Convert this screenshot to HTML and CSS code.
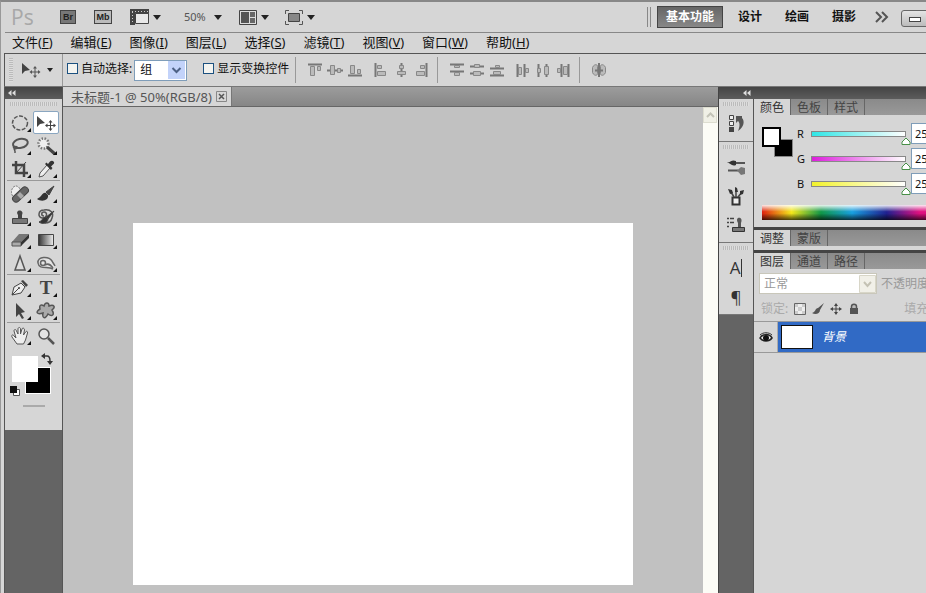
FILE: index.html
```html
<!doctype html>
<html lang="zh-CN">
	<head>
		<meta charset="UTF-8" />
		<title>未标题-1</title>
		<link rel="stylesheet" href="styles.css">
	</head>
	<body>
		<header class="appbar">
			<span class="logo">Ps</span>
			<button class="badge">Br</button>
			<button class="badge folder">Mb</button>
			<button class="view" aria-label="查看额外内容">
				<svg width="19" height="16" viewBox="0 0 19 16"><path d="M0 0h19v5H5v11H0z" fill="#444"/><path d="M5.5 4.5h13v10h-13z" fill="#e8e8e8" stroke="#444"/><path d="M2 2.5h16M2.5 3v12" stroke="#ccc" stroke-dasharray="1 2"/></svg>
				<i class="arrow"></i>
			</button>
			<label class="zoom"><select aria-label="缩放级别"><option>50%</option></select><i class="arrow"></i></label>
			<button class="view" aria-label="排列文档">
				<svg width="18" height="15" viewBox="0 0 18 15"><path d="M.5.5h17v14H.5z" fill="#ddd" stroke="#444"/><path d="M2 2h8v11H2z" fill="#555"/><path d="M11 2h5v5h-5zM11 8h5v5h-5z" fill="#666"/></svg>
				<i class="arrow"></i>
			</button>
			<button class="view" aria-label="屏幕模式">
				<svg width="18" height="15" viewBox="0 0 18 15" fill="none" stroke="#555"><path d="M.5 4V.5H4M14 .5h3.500V4M17.500 11v3.500H14M4 14.500H.5V11"/><path d="M3.500 3.500h11v8h-11z" fill="#888" stroke="#444"/></svg>
				<i class="arrow"></i>
			</button>
			<div class="spaces">
				<button class="active">基本功能</button>
				<button>设计</button>
				<button>绘画</button>
				<button>摄影</button>
				<button class="more" aria-label="更多"><svg width="14" height="12" viewBox="0 0 14 12" fill="none" stroke="#555" stroke-width="2"><path d="M1 1l5 5-5 5M7 1l5 5-5 5"/></svg></button>
			</div>
			<div class="win"><button aria-label="最小化"><i></i></button></div>
		</header>
		<nav class="menu">
			<a href="#">文件(<u>F</u>)</a>
			<a href="#">编辑(<u>E</u>)</a>
			<a href="#">图像(<u>I</u>)</a>
			<a href="#">图层(<u>L</u>)</a>
			<a href="#">选择(<u>S</u>)</a>
			<a href="#">滤镜(<u>T</u>)</a>
			<a href="#">视图(<u>V</u>)</a>
			<a href="#">窗口(<u>W</u>)</a>
			<a href="#">帮助(<u>H</u>)</a>
		</nav>
		<section class="options">
			<i class="vgrip"></i>
			<button class="current" aria-label="移动工具">
				<svg width="20" height="16" viewBox="0 0 20 16"><path d="M1 1v11l3-3 5-1z" fill="#444"/><path d="M14 4l2 2.500h-1.500V9.500H17V8l2.500 2-2.500 2v-1.500h-2.500v3H16L14 16l-2-2.500h1.500v-3H11V12l-2.500-2L11 8v1.500h2.500v-3H12z" fill="#555"/></svg>
				<i class="arrow small"></i>
			</button>
			<label class="check"><input type="checkbox">自动选择:</label>
			<label class="combo"><select aria-label="自动选择"><option>组</option></select><svg width="17" height="18" viewBox="0 0 17 18"><path d="M0 0h17v18H0z" fill="#c3d3fa"/><path d="M4.500 7l4 4 4-4" fill="none" stroke="#4d6185" stroke-width="2"/></svg></label>
			<label class="check second"><input type="checkbox">显示变换控件</label>
			<div class="align">
				<div>
					<button aria-label="顶对齐"><svg viewBox="0 0 16 14"><path class="ln" d="M1 1.500h14"/><path d="M3.500 3.500h4v9h-4zM10.500 3.500h3v4h-3z"/></svg></button>
					<button aria-label="垂直居中对齐"><svg viewBox="0 0 16 14"><path class="ln" d="M0 7.500h16"/><path d="M3.500 2.500h4v9h-4zM10.500 5.500h3v4h-3z"/></svg></button>
					<button aria-label="底对齐"><svg viewBox="0 0 16 14"><path class="ln" d="M1 12.500h14"/><path d="M3.500 2.500h4v8h-4zM10.500 6.500h3v4h-3z"/></svg></button>
				</div>
				<div>
					<button aria-label="左对齐"><svg viewBox="0 0 16 14"><path class="ln" d="M2.500 0v14"/><path d="M4.500 2.500h4v3h-4zM4.500 8.500h8v4h-8z"/></svg></button>
					<button aria-label="水平居中对齐"><svg viewBox="0 0 16 14"><path class="ln" d="M8.500 0v14"/><path d="M6.500 2.500h4v3h-4zM4.500 8.500h8v3h-8z"/></svg></button>
					<button aria-label="右对齐"><svg viewBox="0 0 16 14"><path class="ln" d="M13.500 0v14"/><path d="M7.500 2.500h4v3h-4zM3.500 8.500h8v4h-8z"/></svg></button>
				</div>
			</div>
			<div class="align">
				<div>
					<button aria-label="按顶分布"><svg viewBox="0 0 16 14"><path class="ln" d="M1 1.500h14M1 8.500h14"/><path d="M5.500 2.500h5v2h-5zM5.500 9.500h5v3h-5z"/></svg></button>
					<button aria-label="垂直居中分布"><svg viewBox="0 0 16 14"><path class="ln" d="M1 3.500h14M1 10.500h14"/><path d="M5.500 1.500h5v3h-5zM4.500 8.500h7v4h-7z"/></svg></button>
					<button aria-label="按底分布"><svg viewBox="0 0 16 14"><path class="ln" d="M1 5.500h14M1 12.500h14"/><path d="M6.500 2.500h4v2h-4zM4.500 8.500h7v3h-7z"/></svg></button>
				</div>
				<div>
					<button aria-label="按左分布"><svg viewBox="0 0 16 14"><path class="ln" d="M2.500 1v13M9.500 1v13"/><path d="M3.500 4.500h3v7h-3zM10.500 5.500h3v4h-3z"/></svg></button>
					<button aria-label="水平居中分布"><svg viewBox="0 0 16 14"><path class="ln" d="M3.500 1v13M11.500 1v13"/><path d="M2.500 5.500h3v4h-3zM9.500 3.500h4v8h-4z"/></svg></button>
					<button aria-label="按右分布"><svg viewBox="0 0 16 14"><path class="ln" d="M6.500 1v13M13.500 1v13"/><path d="M2.500 5.500h3v4h-3zM8.500 3.500h4v8h-4z"/></svg></button>
				</div>
			</div>
			<div class="align">
				<button aria-label="自动对齐图层"><svg viewBox="0 0 16 14"><path d="M1.500 4.500c1-3 5-4 5-1v7c0 3-4 2-5-1zM14.500 4.500c-1-3-5-4-5-1v7c0 3 4 2 5-1z"/><path class="ln" d="M4 7.500h8M8 0v14"/></svg></button>
			</div>
		</section>
		<main class="work">
			<aside class="tools">
				<div class="bar"><svg width="8" height="6" viewBox="0 0 8 6"><path d="M3.500 0v6L0 3zM7.500 0v6L4 3z" fill="#ddd"/></svg></div>
				<div class="toolbox">
					<i class="grip"></i>
					<div class="group">
						<button class="sub" aria-label="椭圆选框工具"><svg viewBox="0 0 20 20"><ellipse cx="10" cy="10" rx="7.500" ry="7" fill="none" stroke="#555" stroke-width="1.500" stroke-dasharray="4 1.500"/></svg></button>
						<button class="active" aria-label="移动工具"><svg viewBox="0 0 20 20"><path d="M1 3v11l3-3 5-1z" fill="#444"/><path d="M14.500 7l2 2.500H15V12h2.500v-1.500L20 12.500l-2.500 2V13H15v2.500h1.500l-2 2.500-2-2.500H14V13h-2.500v1.500L9 12.500l2.500-2V12H14V9.500h-1.500z" fill="#444"/></svg></button>
						<button class="sub" aria-label="套索工具"><svg viewBox="0 0 20 20" fill="none" stroke="#555" stroke-width="2"><ellipse cx="10.500" cy="7.500" rx="7.500" ry="4.500" transform="rotate(-12 10 8)"/><path d="M4 10c-2 2 2 4 3 2S4 10 4 12s1.500 2 1 5" stroke-width="1.500"/></svg></button>
						<button class="sub" aria-label="魔棒工具"><svg viewBox="0 0 20 20"><circle cx="7.500" cy="7.500" r="5" fill="#eee" stroke="#777" stroke-width="2.500" stroke-dasharray="1.500 1.500"/><path d="M11 11l8 7" stroke="#444" stroke-width="3"/></svg></button>
						<button class="sub" aria-label="裁剪工具"><svg viewBox="0 0 20 20" fill="none" stroke="#444" stroke-width="2.500"><path d="M6 2v12h12M2 6h12v12"/><path d="M6 14l10-11" stroke-width="1"/></svg></button>
						<button class="sub" aria-label="吸管工具"><svg viewBox="0 0 20 20"><path d="M3 18l1-4 7-8 3 3-7 8z" fill="#eee" stroke="#555"/><path d="M9 5l6 6 1.500-2L15 7.500l3-3c1-2-2-4-4-2l-2 2.500-1.500-1.500z" fill="#333"/></svg></button>
					</div>
					<div class="group">
						<button class="sub" aria-label="修复画笔"><svg viewBox="0 0 20 20"><ellipse cx="6" cy="8" rx="4.500" ry="6" fill="#eee" stroke="#777" stroke-dasharray="2 1"/><rect x="1" y="7" width="19" height="7" rx="3.500" fill="#666" stroke="#444" transform="rotate(-43 10.500 10.500)"/><path d="M7 11l3-3 4 4-3 3z" fill="#aaa"/></svg></button>
						<button class="sub" aria-label="画笔工具"><svg viewBox="0 0 20 20"><path d="M18 2l-8 6 3 3z" fill="#444" stroke="#444"/><path d="M10 9c-4-1-4 4-9 6 4 3 12 2 11-4z" fill="#333"/></svg></button>
						<button class="sub" aria-label="仿制图章"><svg viewBox="0 0 20 20"><path d="M8 8C4 2 15 2 12 8v4H8z" fill="#444"/><path d="M2.500 11.500h15v5h-15z" fill="#777" stroke="#444"/></svg></button>
						<button class="sub" aria-label="历史记录画笔"><svg viewBox="0 0 20 20"><path d="M8 9c-3 0-3-4 0-4 4 0 3 6-1 6-6 0-5-8 1-8 7-1 10 3 8 8-1 4-4 5-7 5" fill="none" stroke="#555" stroke-width="1.500"/><path d="M18 4l-8 6 2 2zM10 10c-4 0-3 4-7 5 4 3 9 1 9-3z" fill="#333" stroke="#444"/></svg></button>
						<button class="sub" aria-label="橡皮擦"><svg viewBox="0 0 20 20"><path d="M9 4h10l-8 8H2z" fill="#777"/><path d="M2 12h9v4H2z" fill="#aaa" stroke="#555"/><path d="M11 12l8-8v4l-8 8z" fill="#333"/></svg></button>
						<button class="sub" aria-label="渐变工具"><svg viewBox="0 0 20 20"><defs><linearGradient id="gr"><stop stop-color="#333"/><stop offset="1" stop-color="#eee"/></linearGradient></defs><path d="M2.500 4.500h15v11h-15z" fill="url(#gr)" stroke="#444"/></svg></button>
						<button class="sub" aria-label="锐化工具"><svg viewBox="0 0 20 20"><path d="M10 3l5 14H5z" fill="#ddd" stroke="#555" stroke-width="1.500"/></svg></button>
						<button class="sub" aria-label="海绵工具"><svg viewBox="0 0 20 20" fill="#e4e4e4" stroke="#666" stroke-width="1.500"><path d="M17 16c-5-3-14 1-15-6S13 3 16 8c1 2 2 3 3 5"/><circle cx="7" cy="10" r="2.500"/><path d="M9 12c3-2 6 0 8 3" fill="none"/></svg></button>
					</div>
					<div class="group">
						<button class="sub" aria-label="钢笔工具"><svg viewBox="0 0 20 20"><path d="M2 17l2-8 7-4 4 4-4 6z" fill="#eee" stroke="#444"/><path d="M11 3l2-1 5 5-2 2z" fill="#444"/><path d="M2 17l7-7" stroke="#444"/><circle cx="9" cy="10" r="1" fill="#444"/></svg></button>
						<button class="sub type" aria-label="横排文字工具">T</button>
						<button class="sub" aria-label="路径选择工具"><svg viewBox="0 0 20 20"><path d="M6 2v14l3-3 3 5 2-1-3-5 4-1z" fill="#444"/></svg></button>
						<button class="sub" aria-label="自定形状工具"><svg viewBox="0 0 20 20"><path d="M8 5c1-4 5-4 5 0 5-2 7 1 3 4 3 5 0 7-4 4-3 6-6 4-5-1-6 2-8-1-3-4-1-4 1-5 4-3z" fill="#aaa" stroke="#555" stroke-width="1.500"/></svg></button>
					</div>
					<div class="group last">
						<button class="sub" aria-label="抓手工具"><svg viewBox="0 0 20 20"><path d="M7 18L2 11c-1-2 1-3 2-1l2 2-2-7c0-2 2-2 2.500 0L8 8V3c0-2 2.500-2 2.500 0v5L12 3c.5-1.500 2.500-1 2.500 1l-1 5 2-3c1-1.500 2.500-.5 2 1l-2 7-2 4z" fill="#eee" stroke="#555"/></svg></button>
						<button aria-label="缩放工具"><svg viewBox="0 0 20 20"><circle cx="8" cy="8" r="5" fill="#e4e4e4" stroke="#555" stroke-width="1.500"/><path d="M12 12l6 6" stroke="#555" stroke-width="2.500"/></svg></button>
					</div>
					<div class="colors">
						<button class="back" aria-label="背景色"></button>
						<button class="fore" aria-label="前景色"></button>
						<button class="swap" aria-label="切换颜色"><svg width="12" height="12" viewBox="0 0 12 12"><path d="M3 3h3q3 0 3 5" fill="none" stroke="#333" stroke-width="1.500"/><path d="M0 3l4-3v6zM6 8h6l-3 4z" fill="#333"/></svg></button>
						<button class="reset" aria-label="默认颜色"><svg width="10" height="10" viewBox="0 0 10 10"><path d="M3.500 3.500h6v6h-6z" fill="#fff" stroke="#555"/><path d="M0 0h7v7H0z" fill="#111"/></svg></button>
					</div>
					<i class="mask"></i>
				</div>
			</aside>
			<section class="doc">
				<div class="tabs">
					<div class="tab">未标题-1 @ 50%(RGB/8)<button aria-label="关闭"><svg width="11" height="11" viewBox="0 0 11 11" fill="none" stroke="#888"><path d="M.5.5h10v10H.5z"/><path d="M3 3l5 5M8 3L3 8" stroke="#555" stroke-width="1.500"/></svg></button></div>
				</div>
				<div class="stage">
					<div class="desk"><div class="paper"></div></div>
					<div class="scroll"><button aria-label="向上滚动"><svg width="9" height="6" viewBox="0 0 9 6"><path d="M1 5l3.500-3.500L8 5" fill="none" stroke="#c4c4b8" stroke-width="2"/></svg></button></div>
				</div>
			</section>
			<aside class="dock">
				<div class="bar"><svg width="8" height="6" viewBox="0 0 8 6"><path d="M3.500 0v6L0 3zM7.500 0v6L4 3z" fill="#ddd"/></svg></div>
				<div class="cols">
					<div class="icons">
						<div class="set">
							<i class="grip"></i>
							<button aria-label="历史记录"><svg viewBox="0 0 20 20"><path d="M3.500 1.500h4v4h-4zM3.500 7.500h4v4h-4z" fill="#eee" stroke="#444"/><path d="M3 13h5v5H3z" fill="#444"/><path d="M10 2h6v2c3 3 2 9-4 13 2-5 2-8 0-10l-2 2z" fill="#555"/></svg></button>
						</div>
						<div class="set">
							<i class="grip"></i>
							<button aria-label="画笔"><svg viewBox="0 0 20 20"><path d="M1 5c4 1 4-3 9-1v4C6 10 4 6 1 5z" fill="#333"/><path d="M10 6h9M2 13.500h10" stroke="#555" stroke-width="2"/><path d="M11 13.500l4-3.500 4 1v6l-4 1z" fill="#777"/></svg></button>
							<button aria-label="画笔预设"><svg viewBox="0 0 20 20"><path d="M6.500 11.500h7v7h-7z" fill="#eee" stroke="#333" stroke-width="2"/><path d="M8 11L5 6M10 11V5M12 11l4-5" stroke="#444" stroke-width="1.500"/><path d="M2 3l4 1 1 3-3 1zM9 1l2 1 1 4H9zM14 5l4-1-1 4-3 1z" fill="#333"/></svg></button>
							<button aria-label="仿制源"><svg viewBox="0 0 20 20"><path d="M1 3.500h2M4 3.500h4M1 7.500h2M4 7.500h4M1 11.500h2" stroke="#444" stroke-width="1.500"/><path d="M12 8c-4-7 6-7 3 0v4h-3z" fill="#555"/><path d="M6.500 12.500h12v4h-12z" fill="#777" stroke="#333"/></svg></button>
						</div>
						<div class="set last">
							<i class="grip"></i>
							<button class="glyph" aria-label="字符"><span>A</span></button>
							<button class="glyph" aria-label="段落">¶</button>
						</div>
					</div>
					<div class="panels">
						<section class="panel">
							<div class="ptabs"><button class="active">颜色</button><button>色板</button><button>样式</button></div>
							<div class="color">
								<div class="pair"><i class="bg"></i><i class="fg"></i></div>
								<div class="rows">
									<div><label for="r">R</label><input class="red" type="range" max="255" value="255" aria-label="R"><input id="r" type="text" value="255"></div>
									<div><label for="g">G</label><input class="green" type="range" max="255" value="255" aria-label="G"><input id="g" type="text" value="255"></div>
									<div><label for="b">B</label><input class="blue" type="range" max="255" value="255" aria-label="B"><input id="b" type="text" value="255"></div>
								</div>
							</div>
							<div class="spectrum"></div>
						</section>
						<section class="panel">
							<div class="ptabs"><button class="active">调整</button><button>蒙版</button></div>
						</section>
						<section class="panel grow">
							<div class="ptabs"><button class="active">图层</button><button>通道</button><button>路径</button></div>
							<div class="blend">
								<label class="mode"><select aria-label="混合模式" disabled><option>正常</option></select><svg width="17" height="18" viewBox="0 0 17 18"><path d="M.5.5h16v17H.5z" fill="#f1f0e8" stroke="#d8d6c8"/><path d="M5 7l3.500 4L12 7" fill="none" stroke="#c4c2b4" stroke-width="2"/></svg></label>
								<span>不透明度</span>
							</div>
							<div class="lock">
								<span>锁定:</span>
								<button aria-label="锁定透明像素"><svg viewBox="0 0 12 12"><path d="M.5.5h11v11H.5z" fill="#eee" stroke="#666"/><path d="M1 1h3v3H1zM4 4h4v4H4zM8 1h3v3H8zM1 8h3v3H1zM8 8h3v3H8z" fill="#ccc"/></svg></button>
								<button aria-label="锁定图像像素"><svg viewBox="0 0 12 12"><path d="M12 0L6 5l2 2zM6 5C3 5 4 9 0 10c3 2 8 1 8-3z" fill="#555"/></svg></button>
								<button aria-label="锁定位置"><svg viewBox="0 0 12 12"><path d="M6 0l2 3H4zM6 12l2-3H4zM0 6l3-2v4zM12 6L9 4v4z" fill="#444"/><path d="M6 2v8M2 6h8" stroke="#444"/></svg></button>
								<button aria-label="锁定全部"><svg viewBox="0 0 12 12"><path d="M3.500 6V3.500c0-3 5-3 5 0V6" fill="#bbb" stroke="#555" stroke-width="1.500"/><path d="M2 5h8v6H2z" fill="#555"/></svg></button>
								<span class="fill">填充</span>
							</div>
							<div class="layer">
								<button class="eye" aria-label="图层可见"><svg width="14" height="12" viewBox="0 0 14 12"><path d="M1 7c2-4 9-5 12 0-3 4-9 4-12 0z" fill="#eee" stroke="#222" stroke-width="1.500"/><circle cx="7" cy="7" r="3" fill="#111"/><path d="M1 4c3-3 9-3 12 0" fill="none" stroke="#333"/></svg></button>
								<div class="name"><i></i><em>背景</em></div>
							</div>
						</section>
					</div>
				</div>
			</aside>
		</main>
	</body>
</html>
```

FILE: styles.css
```css
*{
	margin: 0;
	padding: 0;
	box-sizing: border-box;
}
body{
	display: flex;
	flex-direction: column;
	height: 100vh;
	overflow: hidden;
	background: #d6d6d6;
	border-top: 2px solid #888;
	border-left: 1px solid #999;
	font: 12px/16px "Noto Sans", "Noto Sans CJK SC", sans-serif;
	color: #111;
}
button, input, select{
	font: inherit;
	color: inherit;
	border: 0;
	background: none;
	appearance: none;
	outline: 0;
}
svg{
	display: block;
	flex: none;
}
i{
	display: block;
}
.arrow{
	border: 4px solid transparent;
	border-top: 5px solid #222;
	border-bottom: 0;
}
.arrow.small{
	border-width: 4px 3px 0;
}

/* 顶栏 */
.appbar{
	display: flex;
	align-items: center;
	flex: none;
	height: 31px;
	margin-left: 4px;
	padding-left: 6px;
	border-bottom: 1px solid #888;
}
.logo{
	width: 49px;
	font: 21px/28px "Open Sans", sans-serif;
	color: #a8a8a8;
}
.badge{
	width: 16px;
	height: 14px;
	margin-right: 18px;
	background: #777;
	border: 1px solid #444;
	font: bold 9px/11px "Liberation Sans", sans-serif;
	color: #222;
}
.badge.folder{
	width: 18px;
	background: #bbb;
}
.view{
	display: flex;
	align-items: center;
	gap: 4px;
	margin-right: 16px;
}
.zoom{
	display: flex;
	align-items: center;
	margin: 0 17px 0 7px;
}
.zoom select{
	width: 30px;
	font-size: 11px;
	color: #555;
}
.spaces{
	display: flex;
	align-items: center;
	margin-left: auto;
	padding-left: 6px;
	border-left: 4px double #888;
	height: 20px;
}
.spaces button{
	padding: 0 8px;
	height: 22px;
	margin-right: 7px;
	font-weight: bold;
	line-height: 20px;
}
.spaces .active{
	border: 1px solid #444;
	background: linear-gradient(#666, #888);
	color: #fff;
}
.spaces .more{
	padding: 0 4px;
	margin-right: 8px;
}
.win{
	width: 25px;
	overflow: hidden;
}
.win button{
	width: 30px;
	height: 17px;
	padding: 6px 7px;
	border: 1px solid #666;
	border-radius: 3px;
	background: linear-gradient(#e4e4e4, #bbb);
}
.win i{
	width: 12px;
	height: 5px;
	border: 1px solid #444;
	background: #fff;
}

/* 菜单 */
.menu{
	display: flex;
	flex: none;
	gap: 18px;
	height: 21px;
	margin-left: 3px;
	padding-left: 8px;
	border-bottom: 1px solid #555;
}
.menu a{
	font-size: 13px;
	line-height: 19px;
	color: #111;
	text-decoration: none;
}

/* 选项栏 */
.options{
	display: flex;
	align-items: center;
	flex: none;
	height: 33px;
	margin-left: 3px;
	border-left: 1px solid #555;
	border-bottom: 1px solid #777;
}
.vgrip{
	width: 4px;
	height: 24px;
	margin-left: 4px;
	background: repeating-linear-gradient(#bbb 0 1px, #ddd 1px 2px);
}
.current{
	display: flex;
	align-items: center;
	gap: 6px;
	height: 32px;
	padding: 0 9px 0 8px;
	border-right: 1px solid #999;
}
.check{
	display: flex;
	align-items: center;
	gap: 3px;
	margin: 0 2px 3px 4px;
}
.check.second{
	margin: 0 0 3px 16px;
}
.check input{
	width: 11px;
	height: 11px;
	border: 1px solid #1c5180;
	background: #f4f4f0;
}
.combo{
	display: flex;
	align-items: center;
	width: 53px;
	height: 21px;
	padding-right: 1px;
	border: 1px solid #7f9db9;
	background: #fff;
}
.combo select{
	flex: 1;
	min-width: 0;
	padding-left: 5px;
}
.align{
	display: flex;
	gap: 6px;
	height: 26px;
	margin-left: 6px;
	padding-left: 9px;
	border-left: 1px solid #999;
}
.align div{
	display: flex;
}
.align button{
	display: flex;
	align-items: center;
	justify-content: center;
	width: 20px;
}
.align svg{
	width: 16px;
	height: 14px;
	fill: #bbb;
	stroke: #888;
}
.align .ln{
	stroke: #777;
	stroke-width: 2;
}

/* 工作区 */
.work{
	display: flex;
	flex: 1;
	min-height: 0;
	margin-left: 3px;
	border-left: 1px solid #555;
}
.bar{
	flex: none;
	height: 12px;
	padding: 3px;
	background: linear-gradient(#444, #5c5c5c);
}
.grip{
	height: 4px;
	background: repeating-linear-gradient(90deg, #bbb 0 1px, #ddd 1px 2px);
}
.tools{
	display: flex;
	flex-direction: column;
	flex: none;
	width: 58px;
	background: #646464;
	border-right: 1px solid #555;
}
.toolbox{
	padding: 3px 2px 23px;
	background: #d6d6d6;
}
.toolbox .grip{
	margin: 0 3px 4px;
}
.group{
	display: grid;
	grid-template-columns: 26px 26px;
	grid-auto-rows: 23px;
	padding-top: 1px;
	border-bottom: 1px solid #999;
}
.group.last{
	border: 0;
}
.group button{
	position: relative;
	display: flex;
	align-items: center;
	justify-content: center;
}
.group svg{
	width: 20px;
	height: 20px;
}
.group .active{
	background: #fff;
	border: 1px solid #8aa6c0;
	border-radius: 2px;
}
.group .sub:after{
	content: "";
	position: absolute;
	right: 2px;
	bottom: 2px;
	border: 2px solid #111;
	border-top-color: transparent;
	border-left-color: transparent;
}
.group .type{
	font: bold 19px/20px "Liberation Serif", serif;
	color: #444;
}
.colors{
	position: relative;
	height: 50px;
	margin-top: 6px;
}
.colors button{
	position: absolute;
}
.colors .fore{
	left: 5px;
	top: 3px;
	width: 26px;
	height: 26px;
	background: #fff;
}
.colors .back{
	left: 18px;
	top: 14px;
	width: 26px;
	height: 27px;
	border: 1px solid #fff;
	background: #000;
}
.swap{
	left: 34px;
	top: 0;
}
.reset{
	left: 3px;
	top: 33px;
}
.mask{
	width: 22px;
	height: 2px;
	margin: 2px auto 0 16px;
	background: #aaa;
}

.doc{
	display: flex;
	flex-direction: column;
	flex: 1;
	min-width: 0;
}
.tabs{
	display: flex;
	flex: none;
	height: 20px;
	background: linear-gradient(#9c9c9c, #868686);
	border-bottom: 1px solid #666;
}
.tab{
	display: flex;
	align-items: center;
	gap: 4px;
	padding: 0 4px 0 8px;
	background: #d6d6d6;
	border-right: 1px solid #777;
	font-size: 13px;
	color: #555;
}
.stage{
	display: flex;
	flex: 1;
	min-height: 0;
	background: #c1c1c1;
}
.desk{
	flex: 1;
	padding: 116px 70px 8px;
}
.paper{
	height: 100%;
	background: #fff;
}
.scroll{
	width: 15px;
	background: #fcfcf6;
}
.scroll button{
	display: flex;
	align-items: center;
	justify-content: center;
	width: 14px;
	height: 16px;
	background: #f0f0e6;
	border: 1px solid #ddddd0;
}

.dock{
	display: flex;
	flex-direction: column;
	flex: none;
	width: 208px;
	border-left: 1px solid #444;
}
.dock .bar{
	padding-left: 24px;
}
.cols{
	display: flex;
	flex: 1;
	min-height: 0;
}
.icons{
	flex: none;
	width: 35px;
	background: #646464;
	border-right: 1px solid #555;
}
.set{
	display: flex;
	flex-direction: column;
	padding: 3px 0;
	background: #d6d6d6;
	border-bottom: 1px solid #777;
}
.set .grip{
	margin: 0 4px 3px;
}
.set button{
	display: flex;
	align-items: center;
	justify-content: center;
	height: 29px;
}
.set svg{
	width: 20px;
	height: 20px;
}
.set .glyph{
	font: 17px/18px "Open Sans", sans-serif;
	color: #333;
}
.glyph span{
	padding-right: 1px;
	border-right: 1px solid #333;
}

/* 面板 */
.panels{
	display: flex;
	flex-direction: column;
	flex: 1;
	min-width: 0;
	overflow: hidden;
}
.panel{
	padding-bottom: 4px;
	background: #d6d6d6;
	border-bottom: 3px solid #444;
}
.panel.grow{
	flex: 1;
	border: 0;
}
.ptabs{
	display: flex;
	height: 16px;
	background: linear-gradient(#8a8a8a, #999);
}
.ptabs button{
	width: 37px;
	line-height: 15px;
	border-right: 1px solid #666;
	color: #444;
}
.ptabs .active{
	background: #d6d6d6;
	color: #333;
}
.color{
	display: flex;
	padding: 8px 0 0 8px;
}
.pair{
	position: relative;
	flex: none;
	width: 30px;
	margin-top: 4px;
}
.pair i{
	position: absolute;
	width: 19px;
	height: 20px;
	border: 2px solid #000;
}
.pair .fg{
	background: #fff;
}
.pair .bg{
	left: 12px;
	top: 12px;
	height: 18px;
	background: #000;
	border: 1px solid #888;
}
.rows{
	flex: none;
	width: 160px;
}
.rows div{
	display: flex;
	align-items: center;
	height: 21px;
	margin-bottom: 4px;
}
.rows label{
	width: 14px;
	padding-left: 5px;
	font-size: 11px;
}
.rows input[type=range]{
	width: 105px;
	height: 14px;
	margin-top: 8px;
	background: linear-gradient(90deg, #2fe6e6, #fff) no-repeat center 1px / 93px 4px, linear-gradient(#888, #888) no-repeat center top / 95px 6px;
}
.rows input.green{
	background-image: linear-gradient(90deg, #dc1edc, #fff), linear-gradient(#888, #888);
}
.rows input.blue{
	background-image: linear-gradient(90deg, #f2f22c, #fff), linear-gradient(#888, #888);
}
input::-webkit-slider-thumb{
	appearance: none;
	width: 10px;
	height: 8px;
	margin-top: 6px;
	background: url("data:image/svg+xml,%3Csvg xmlns='http://www.w3.org/2000/svg' width='10' height='8'%3E%3Cpath d='M5 1l4 4v2.500H1V5z' fill='%23fff' stroke='%23489048'/%3E%3C/svg%3E");
}
.rows input[type=text]{
	flex: none;
	width: 34px;
	height: 21px;
	padding-left: 3px;
	border: 1px solid #7f9db9;
	background: #fff;
	font-size: 11px;
}
.spectrum{
	height: 15px;
	margin: 7px 0 3px 8px;
	background: linear-gradient(rgba(255,255,255,.9), rgba(255,255,255,0) 45%, rgba(0,0,0,0) 55%, rgba(0,0,0,.7)), linear-gradient(90deg, #e02010, #f4e81c 18%, #109848 36%, #18a0e0 55%, #202090 76%, #e01080 96%);
}
.blend{
	display: flex;
	align-items: center;
	gap: 4px;
	padding: 4px 0 0 5px;
	white-space: nowrap;
	color: #999;
}
.mode{
	display: flex;
	align-items: center;
	flex: none;
	width: 118px;
	height: 21px;
	border: 1px solid #c9c7ba;
	background: #fff;
}
.mode select{
	flex: 1;
	min-width: 0;
	padding-left: 4px;
	opacity: 1;
}
.lock{
	display: flex;
	align-items: center;
	gap: 6px;
	height: 27px;
	padding: 2px 0 0 7px;
	white-space: nowrap;
	color: #aaa;
}
.lock svg{
	width: 12px;
	height: 12px;
}
.lock .fill{
	margin-left: 38px;
}
.layer{
	display: flex;
	height: 32px;
	border-top: 1px solid #999;
	border-bottom: 1px solid #999;
}
.eye{
	display: flex;
	align-items: center;
	justify-content: center;
	width: 24px;
	border-right: 1px solid #aaa;
}
.name{
	display: flex;
	align-items: center;
	flex: 1;
	gap: 9px;
	padding-left: 3px;
	background: #316ac5;
	color: #fff;
}
.name i{
	width: 32px;
	height: 24px;
	background: #fff;
	border: 1px solid #111;
}
```
